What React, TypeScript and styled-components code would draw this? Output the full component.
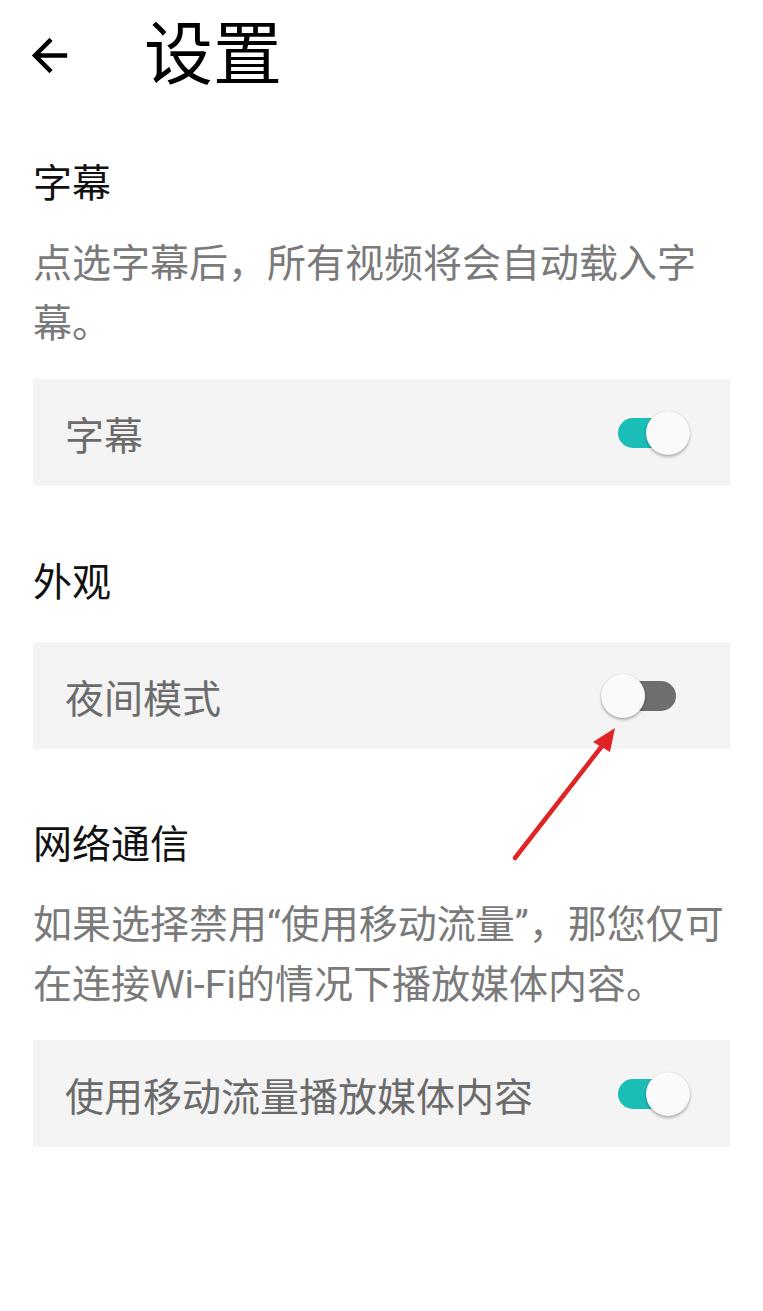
import React from 'react';
import styled, { createGlobalStyle } from 'styled-components';

const GlobalStyle = createGlobalStyle`
  html, body {
    margin: 0;
    padding: 0;
    background: #ffffff;
  }
  body {
    font-family: Roboto, "Noto Sans CJK SC", sans-serif;
    -webkit-font-smoothing: antialiased;
  }
`;

const Page = styled.div`
  position: relative;
  width: 763px;
  min-height: 1311px;
  padding: 0 33px;
  box-sizing: border-box;
  background: #ffffff;
`;

const Header = styled.header`
  display: flex;
  align-items: center;
  height: 110px;
`;

const BackButton = styled.button`
  display: flex;
  align-items: center;
  justify-content: center;
  width: 53px;
  height: 53px;
  margin-left: -10px;
  padding: 0;
  border: none;
  background: none;
  color: #000000;
`;

const Title = styled.h1`
  margin: 0 0 0 68px;
  font-size: 69px;
  font-weight: 400;
  line-height: 1;
  color: #000000;
`;

const Section = styled.section<{ $gap: number }>`
  margin-top: ${(p) => p.$gap}px;
`;

const Heading = styled.h2`
  margin: 0;
  font-size: 39px;
  font-weight: 400;
  line-height: 60px;
  color: #111111;
`;

const Description = styled.p`
  margin: 20px 0 0;
  font-size: 39px;
  line-height: 60px;
  color: #7a7a7a;
`;

const Card = styled.div<{ $gap: number }>`
  display: flex;
  align-items: center;
  justify-content: space-between;
  height: 107px;
  margin-top: ${(p) => p.$gap}px;
  padding: 0 39px 0 32px;
  background: #f4f4f4;
`;

const Label = styled.span`
  font-size: 39px;
  color: #6b6b6b;
`;

const SwitchBox = styled.div`
  position: relative;
  width: 90px;
  height: 46px;
  flex-shrink: 0;
`;

const Track = styled.div<{ $on: boolean }>`
  position: absolute;
  left: 17px;
  right: 15px;
  top: 8px;
  bottom: 8px;
  border-radius: 15px;
  background: ${(p) => (p.$on ? '#1bbdb7' : '#6e6e6e')};
`;

const Thumb = styled.div<{ $on: boolean }>`
  position: absolute;
  top: 1px;
  left: ${(p) => (p.$on ? 45 : 0)}px;
  width: 44px;
  height: 44px;
  border-radius: 50%;
  background: #fafafa;
  box-shadow: 0 2px 3px rgba(0, 0, 0, 0.28), 0 0 1px rgba(0, 0, 0, 0.2);
`;

const Pointer = styled.svg`
  position: absolute;
  left: 500px;
  top: 715px;
  width: 130px;
  height: 160px;
`;

const Switch = ({ on }: { on: boolean }) => (
  <SwitchBox>
    <Track $on={on} />
    <Thumb $on={on} />
  </SwitchBox>
);

const ArrowBack = () => (
  <svg width="53" height="53" viewBox="0 0 24 24" fill="currentColor">
    <path d="M20 11H7.83l5.59-5.59L12 4l-8 8 8 8 1.41-1.41L7.83 13H20v-2z" />
  </svg>
);

export default function App() {
  return (
    <>
      <GlobalStyle />
      <Page>
        <Header>
          <BackButton aria-label="返回">
            <ArrowBack />
          </BackButton>
          <Title>设置</Title>
        </Header>

        <Section $gap={44}>
          <Heading>字幕</Heading>
          <Description>点选字幕后，所有视频将会自动载入字幕。</Description>
          <Card $gap={25}>
            <Label>字幕</Label>
            <Switch on />
          </Card>
        </Section>

        <Section $gap={67}>
          <Heading>外观</Heading>
          <Card $gap={29}>
            <Label>夜间模式</Label>
            <Switch on={false} />
          </Card>
        </Section>

        <Section $gap={66}>
          <Heading>网络通信</Heading>
          <Description>
            如果选择禁用“使用移动流量”，那您仅可在连接Wi-Fi的情况下播放媒体内容。
          </Description>
          <Card $gap={25}>
            <Label>使用移动流量播放媒体内容</Label>
            <Switch on />
          </Card>
        </Section>

        <Pointer viewBox="0 0 130 160">
          <line x1="15" y1="143" x2="102" y2="31" stroke="#e02424" strokeWidth="4.5" strokeLinecap="round" />
          <polygon points="115,13 93,27 110,37" fill="#e02424" />
        </Pointer>
      </Page>
    </>
  );
}
